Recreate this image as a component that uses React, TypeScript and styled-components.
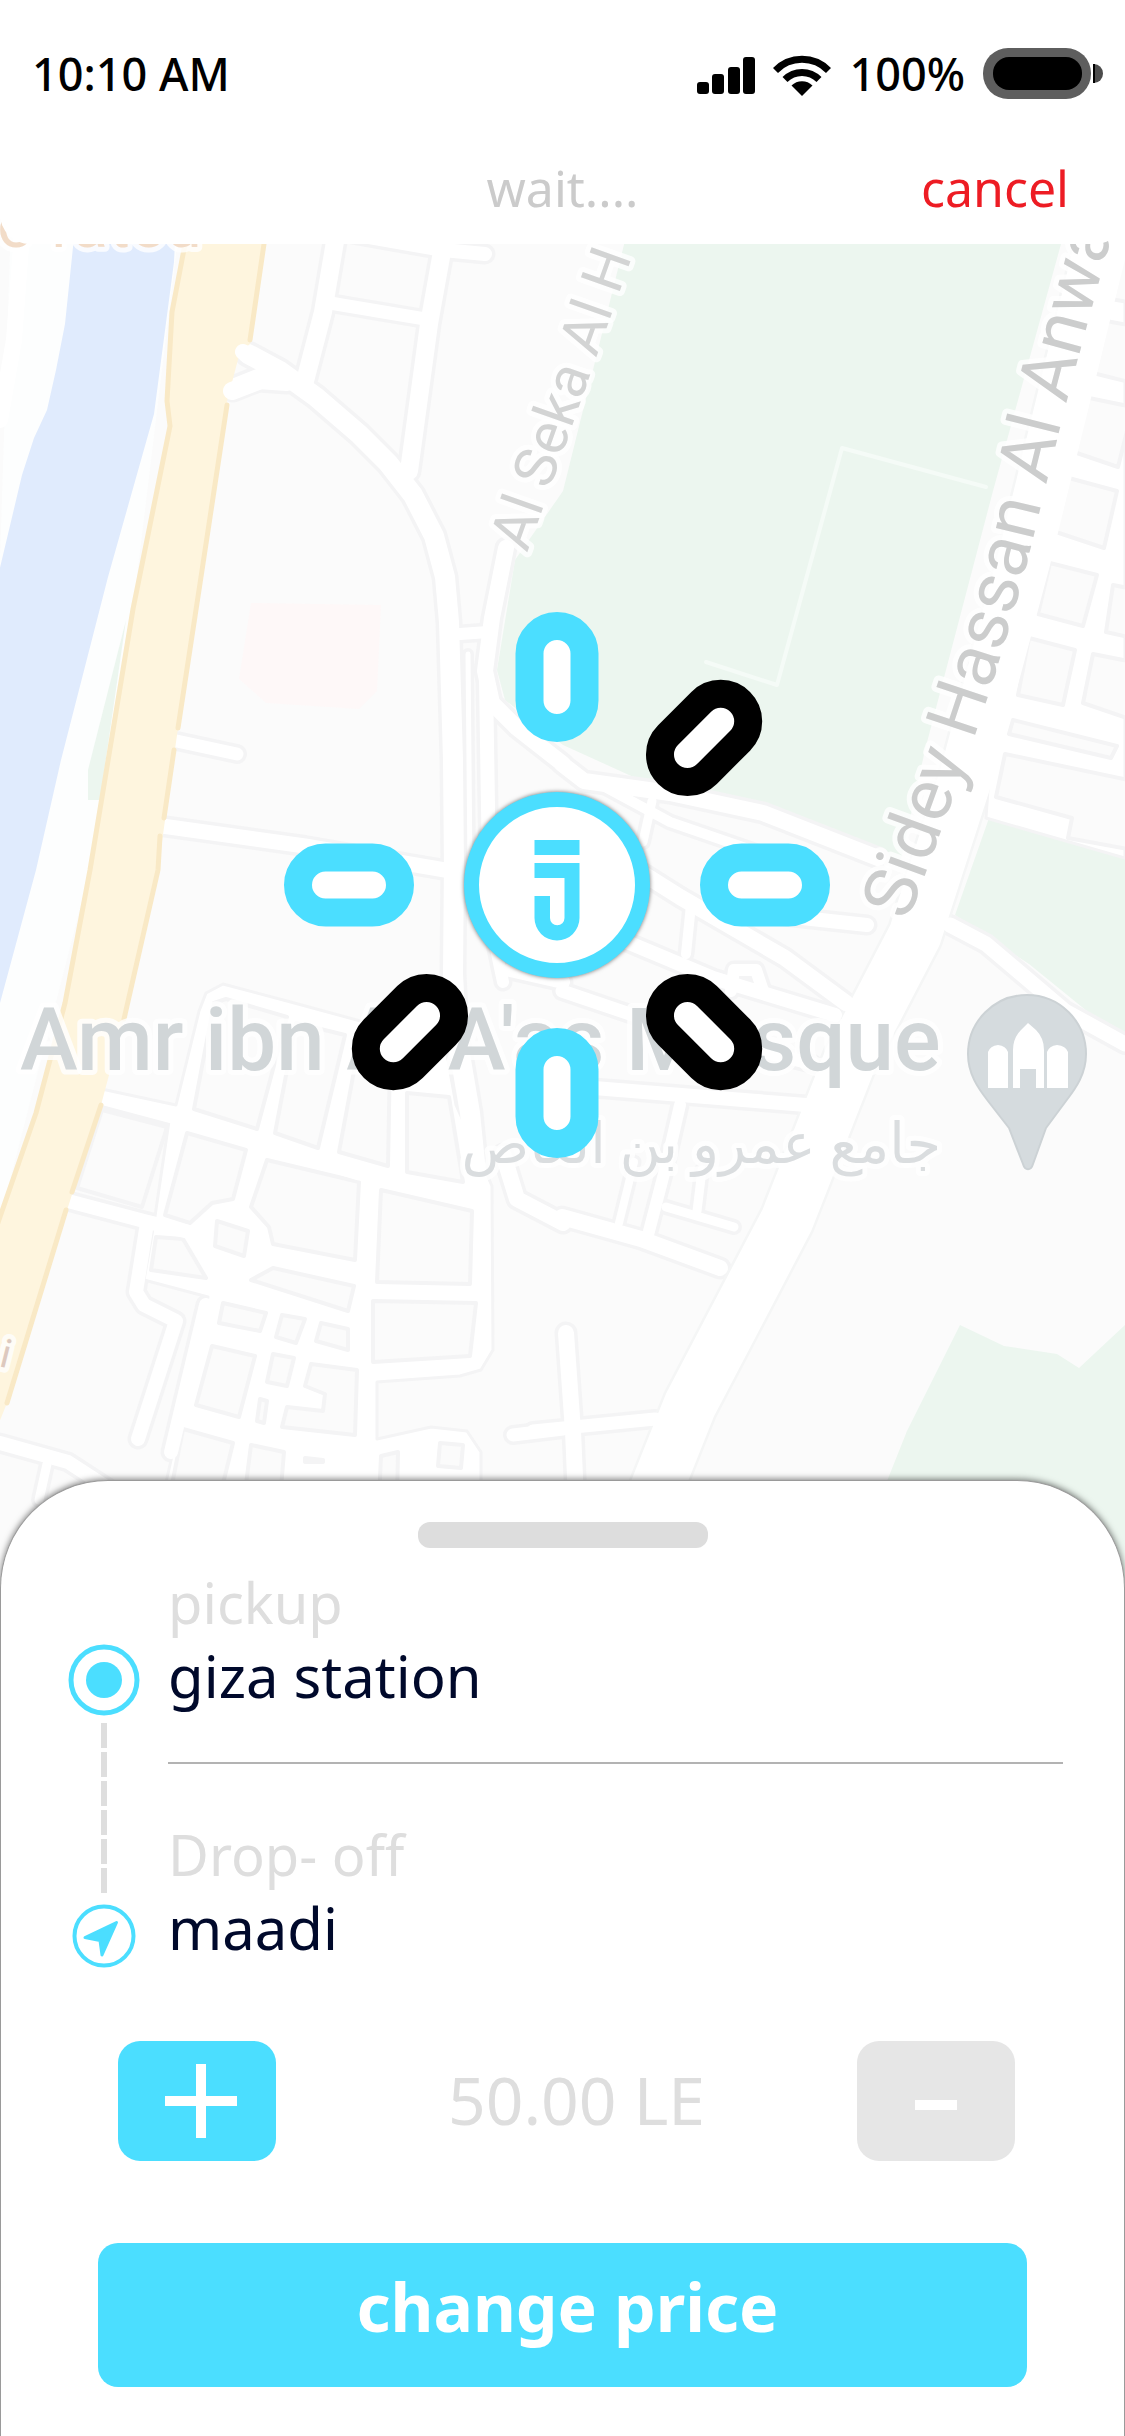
import React, { useState } from "react";
import styled, { createGlobalStyle } from "styled-components";

const CYAN = "#4bdeff";
const INK = "#00092b";
const MUTED = "#dedede";

const GlobalStyle = createGlobalStyle`
  *, *::before, *::after { box-sizing: border-box; }
  body {
    margin: 0;
    background: #ffffff;
    font-family: "Noto Sans", "Open Sans", sans-serif;
  }
  button { font: inherit; border: 0; padding: 0; cursor: pointer; }
`;

/* ---------- layout ---------- */

const Screen = styled.main`
  display: flex;
  flex-direction: column;
  min-height: 100vh;
  overflow: hidden;
`;

const Header = styled.header`
  position: relative;
  z-index: 1;
  background: #ffffff;
  border-radius: 0 0 30px 30px;
`;

const StatusBar = styled.div`
  display: flex;
  align-items: center;
  justify-content: space-between;
  height: 148px;
  padding: 0 22px 0 32px;
  color: #000000;
  font-size: 45px;
  font-weight: 500;
  line-height: 60px;
`;

const StatusGroup = styled.div`
  display: flex;
  align-items: center;
  gap: 18px;
`;

const NavBar = styled.div`
  display: grid;
  grid-template-columns: 1fr auto 1fr;
  align-items: center;
  height: 96px;
  padding: 0 56px 16px;
  font-size: 50px;
  line-height: 64px;
`;

const Title = styled.h1`
  grid-column: 2;
  margin: 0;
  font: inherit;
  color: #cbcbcb;
`;

const CancelButton = styled.button`
  justify-self: end;
  background: none;
  color: #ed1c24;
`;

const MapArea = styled.section`
  position: relative;
  height: 1400px;
  margin-top: -44px;
`;

const MapCanvas = styled.svg`
  display: block;
  width: 100%;
  height: 100%;
`;

const Sheet = styled.section`
  position: relative;
  z-index: 1;
  flex: 1;
  display: flex;
  flex-direction: column;
  margin-top: -120px;
  padding: 41px 61px 44px;
  background: #ffffff;
  border: 1px solid #9a9a9a;
  border-bottom: 0;
  border-radius: 108px 108px 0 0;
  box-shadow: 0 -1px 6px rgba(0, 0, 0, 0.5);
`;

const Handle = styled.div`
  align-self: center;
  width: 290px;
  height: 26px;
  border-radius: 12px;
  background: #dddddd;
`;

const Route = styled.div`
  display: grid;
  grid-template-columns: 84px 1fr;
  column-gap: 22px;
  margin-top: 16px;
`;

const Rail = styled.div`
  display: flex;
  flex-direction: column;
  align-items: center;
  padding-top: 80px;
`;

const Dashes = styled.div`
  display: flex;
  flex-direction: column;
  gap: 4px;
  margin: 7px 0 11px;
`;

const Dash = styled.span`
  width: 6px;
  height: 25px;
  background: ${MUTED};
`;

const Stops = styled.dl`
  margin: 0;
`;

const Stop = styled.div<{ $divided?: boolean }>`
  padding-bottom: ${(p) => (p.$divided ? "50px" : "0")};
  margin-bottom: ${(p) => (p.$divided ? "52px" : "0")};
  border-bottom: ${(p) => (p.$divided ? "2px solid #b3b3b3" : "0")};
`;

const StopLabel = styled.dt`
  color: ${MUTED};
  font-size: 56px;
  line-height: 76px;
`;

const StopPlace = styled.dd`
  margin: 0;
  color: ${INK};
  font-size: 58px;
  line-height: 72px;
`;

const PriceRow = styled.div`
  display: flex;
  align-items: center;
  justify-content: space-between;
  margin: 73px 48px 0 56px;
`;

const StepButton = styled.button<{ $tone: string }>`
  display: grid;
  place-items: center;
  width: 158px;
  height: 120px;
  border-radius: 22px;
  background: ${(p) => p.$tone};
`;

const Price = styled.output`
  padding: 0 0 4px 20px;
  color: ${MUTED};
  font-size: 66px;
  line-height: 88px;
`;

const ChangeButton = styled.button`
  height: 144px;
  margin: 82px 36px 0;
  padding: 0 0 18px 10px;
  border-radius: 20px;
  background: ${CYAN};
  color: #ffffff;
  font-size: 66px;
  font-weight: 700;
  line-height: 88px;
`;

/* ---------- icons ---------- */

const SignalIcon = () => (
  <svg width="58" height="40" viewBox="0 0 58 40" aria-hidden="true">
    <rect x="0" y="28" width="12" height="12" rx="3" />
    <rect x="15" y="20" width="12" height="20" rx="3" />
    <rect x="31" y="13" width="12" height="27" rx="3" />
    <rect x="46" y="3" width="12" height="37" rx="3" />
  </svg>
);

const WifiIcon = () => (
  <svg width="58" height="44" viewBox="0 0 58 44" aria-hidden="true">
    <g fill="none" stroke="#000" strokeWidth="7">
      <path d="M2.500 18.500A37 37 0 0 1 55.500 18.500" />
      <path d="M12 27.500A24 24 0 0 1 46 27.500" />
    </g>
    <path d="M18.500 33.500A15 15 0 0 1 39.500 33.500L29 44Z" />
  </svg>
);

const BatteryIcon = () => (
  <svg width="120" height="52" viewBox="0 0 120 52" aria-hidden="true">
    <rect x="0" y="0" width="108" height="51" rx="25" fill="#5e5e5e" />
    <rect x="10" y="9" width="89" height="33" rx="16" />
    <path d="M111 16a9 9.500 0 0 1 0 19Z" fill="#4c4c4c" />
    <path d="M111 16v19" stroke="#000" strokeWidth="2" />
  </svg>
);

const PickupIcon = () => (
  <svg width="72" height="72" viewBox="0 0 72 72" aria-hidden="true">
    <circle cx="36" cy="36" r="33" fill="none" stroke={CYAN} strokeWidth="5" />
    <circle cx="36" cy="36" r="18" fill={CYAN} />
  </svg>
);

const DropoffIcon = () => (
  <svg width="64" height="64" viewBox="0 0 64 64" aria-hidden="true">
    <circle cx="32" cy="32" r="29.500" fill="none" stroke={CYAN} strokeWidth="4" />
    <path
      d="M44.500 18.500 30 51 28 36.500 13 33.500Z"
      fill={CYAN}
      stroke={CYAN}
      strokeWidth="3"
      strokeLinejoin="round"
    />
  </svg>
);

const PlusIcon = () => (
  <svg width="80" height="74" viewBox="0 0 80 74" aria-hidden="true">
    <path d="M44 0v74M8 37h72" stroke="#fff" strokeWidth="10" />
  </svg>
);

const MinusIcon = () => (
  <svg width="42" height="74" viewBox="0 0 42 74" aria-hidden="true">
    <path d="M0 41h42" stroke="#fff" strokeWidth="10" />
  </svg>
);

/* ---------- map ---------- */

type Origin = [number, number];
const NW: Origin = [0, 230];
const NE: Origin = [562, 230];
const SW: Origin = [0, 860];
const SE: Origin = [562, 860];

/* Survey data is stored per quadrant; this projects it onto the map plane. */
const plot = ([ox, oy]: Origin, data: string) =>
  data
    .split(" ")
    .map((pair) => {
      const [x, y] = pair.split(",").map(Number);
      return `${Math.round(ox + x * 0.359)},${Math.round(oy + y * 0.408)}`;
    })
    .join(" ");

const roads: [Origin, number, string][] = [
  [NW, 20, "690,305 780,345 880,410 1000,500 1080,570 1150,650 1210,750 1240,850 1250,960 1262,1300 1265,1568"],
  [SW, 20, "1265,0 1262,280 1270,420 1310,620 1330,790"],
  [NW, 20, "650,390 720,365 800,370"],
  [NW, 18, "940,0 900,200 850,370"],
  [NW, 18, "1235,40 1195,230 1140,590"],
  [NW, 13, "920,180 1200,220"],
  [NW, 14, "980,10 1235,50 1350,60"],
  [NW, 16, "1410,780 1370,950 1350,1080 1370,1160 1440,1220 1568,1310"],
  [NW, 12, "1280,990 1360,985"],
  [NW, 5, "1305,1040 1310,1568"],
  [NW, 14, "1355,1100 1362,1568"],
  [SW, 12, "1362,0 1368,160 1400,300"],
  [NE, 16, "0,1310 60,1350 300,1380 560,1430 880,1540"],
  [NE, 10, "90,1350 300,1450 560,1530 700,1568"],
  [NE, 9, "250,1400 225,1500"],
  [NW, 13, "480,1250 660,1285"],
  [NW, 15, "450,1460 850,1510 1240,1568"],
  [SW, 13, "270,580 520,640 1000,770 1340,830"],
  [SW, 14, "190,835 400,885 560,920"],
  [SW, 14, "410,890 380,1060 400,1090 490,1130 385,1420"],
  [SW, 14, "575,1090 475,1450"],
  [SW, 14, "0,1430 190,1475 300,1540"],
  [SW, 9, "130,1480 110,1568"],
  [SW, 13, "1430,1410 1568,1395"],
  [SW, 16, "1400,720 1440,830 1568,890"],
  [SW, 14, "1568,300 1420,270"],
  [SE, 14, "0,120 180,200 420,290 760,380"],
  [SE, 16, "200,20 330,90 620,240 790,350"],
  [SE, 10, "360,110 345,230"],
  [SE, 12, "470,320 480,270 540,270 560,320"],
  [SE, 14, "540,130 850,160"],
  [SE, 13, "0,320 330,420 700,500"],
  [SE, 14, "90,560 400,580 680,600"],
  [SE, 12, "330,600 290,750 240,920"],
  [SE, 8, "200,740 160,890"],
  [SE, 9, "290,850 480,900"],
  [SE, 9, "390,760 375,860"],
  [SE, 16, "0,875 220,930 440,1000"],
  [SE, 16, "10,1160 30,1400 40,1568"],
  [SE, 13, "-80,1400 260,1370"],
  [SE, 15, "1080,160 1180,205 1400,370 1568,450"],
];

const streetGrid: [Origin, string][] = [
  [SW, "270,560 490,600 555,370 575,325 620,305 800,345 1240,450 1270,600 1370,800 1372,1200 1340,1250 1280,1265 1050,1280 1050,1420 1200,1390 1300,1400 1340,1450 1340,1568 450,1568 580,1070 400,1030 430,890 470,640 280,600"],
  [NE, "1490,0 1568,0 1568,1540 1180,1440 1200,1200 1400,500"],
];

const blocks: [Origin, string][] = [
  [SW, "285,612 465,655 395,850 215,805"],
  [SW, "540,610 595,350 630,340 800,385 715,660"],
  [SW, "765,670 825,400 960,430 885,705"],
  [SW, "945,715 1000,450 1085,480 1080,750"],
  [SW, "1135,570 1250,580 1290,790 1135,765"],
  [SW, "520,670 685,710 650,830 590,840 530,890 460,870"],
  [SW, "745,735 1000,790 990,980 760,940 750,900 700,850"],
  [SW, "1060,810 1315,860 1310,1040 1050,1035"],
  [SW, "435,925 510,930 575,1025 420,1005"],
  [SW, "605,885 690,910 680,970 600,945"],
  [SW, "760,1000 985,1045 970,1105 700,1030"],
  [SW, "620,1085 740,1110 725,1155 610,1135"],
  [SW, "785,1115 850,1125 825,1185 770,1170"],
  [SW, "895,1135 970,1150 970,1200 880,1180"],
  [SW, "590,1190 710,1215 665,1365 545,1335"],
  [SW, "760,1210 820,1220 800,1290 745,1280"],
  [SW, "865,1235 995,1250 990,1410 785,1390 800,1340 900,1350 905,1310 850,1290"],
  [SW, "725,1320 745,1325 735,1380 715,1375"],
  [SW, "1040,1080 1325,1085 1310,1215 1040,1230"],
  [SW, "510,1395 650,1430 610,1568 470,1568"],
  [SW, "700,1435 790,1450 780,1568 680,1568"],
  [SW, "850,1465 900,1470 900,1475 850,1475"],
  [SW, "1060,1460 1110,1450 1105,1568 1055,1568"],
  [SW, "1225,1430 1290,1435 1285,1490 1220,1485"],
  [NE, "1555,60 1590,60 1590,180 1530,170"],
  [NE, "1500,220 1590,235 1590,375 1480,350"],
  [NE, "1455,410 1590,435 1550,580 1425,545"],
  [NE, "1400,605 1545,640 1510,780 1375,740"],
  [NE, "1360,815 1490,845 1450,970 1325,940"],
  [NE, "1300,1000 1430,1030 1395,1165 1270,1140"],
  [NE, "1480,1040 1590,1060 1590,1200 1450,1160"],
  [NE, "1535,870 1590,880 1590,1000 1515,985"],
  [NE, "1255,1200 1545,1265 1530,1295 1245,1235"],
  [NE, "1235,1285 1590,1350 1590,1520 1410,1490 1420,1440 1210,1390"],
];

const MapLabel = styled.text<{ $size: number; $tone: string; $weight?: number }>`
  font-family: Roboto, "Noto Sans", "DejaVu Sans", sans-serif;
  font-size: ${(p) => p.$size}px;
  font-weight: ${(p) => p.$weight ?? 400};
  fill: ${(p) => p.$tone};
  stroke: rgba(255, 255, 255, 0.8);
  stroke-width: 10px;
  stroke-linejoin: round;
  paint-order: stroke;
`;

const AVENUE = "1120,180 1100,250 1024,560 965,780 915,935 850,1060 787,1220 690,1405 652,1500";

const Streets = () => (
  <g strokeLinejoin="round" strokeLinecap="round">
    <rect x="-400" y="100" width="1925" height="1600" fill="#fbfbfb" />
    <polygon points={plot(NW, "700,915 1060,920 1050,1130 1000,1175 740,1160 665,1100")} fill="#fef8f8" />

    {/* park areas */}
    <g fill="#ecf6ef">
      <polygon points="640,180 1100,180 1061,244 993,491 925,750 900,865 770,815 640,780 563,745 505,700 497,670 515,560 563,491" />
      <polygon points={plot(NE, "1190,1440 1568,1530 1568,1990 1300,1800 1095,1680")} />
      <polygon points={plot(SE, "1110,1140 1230,1190 1380,1210 1440,1245 1568,1140 1568,1800 780,1800 960,1400")} />
    </g>
    <polyline points={plot(NE, "400,1060 600,1115 780,535 1180,630")} fill="none" stroke="#f5fbf7" strokeWidth="4" />

    {/* river and its bank */}
    <polygon points="40,180 185,180 133,609 90,870 0,1219 0,560 10,250" fill="#fdfefe" />
    <polygon
      points="80,180 178,180 174,262 154,414 108,577 61,760 36,870 -10,1040 -10,610 22,475 34,438 47,410 56,370 65,324"
      fill="#e0ebfd"
    />
    <polyline points="26,180 14,340 0,420" fill="none" stroke="#ffffff" strokeWidth="16" />
    <polygon points="126,620 88,770 88,800 100,800" fill="#ecf6ef" />

    {/* road casings, then street grids, then road surfaces */}
    <g fill="none">
      {roads.map(([o, w, d]) => (
        <polyline key={d} points={plot(o, d)} stroke="#f4f4f5" strokeWidth={w + 7} />
      ))}
      <polyline points={AVENUE} stroke="#f5f6f6" strokeWidth="58" />
    </g>
    {streetGrid.map(([o, d]) => (
      <polygon key={d} points={plot(o, d)} fill="#ffffff" stroke="#f4f4f5" strokeWidth="3" />
    ))}
    {blocks.map(([o, d]) => (
      <polygon key={d} points={plot(o, d)} fill="#fbfbfb" stroke="#f4f4f5" strokeWidth="4" />
    ))}
    <g fill="none" stroke="#ffffff">
      {roads.map(([o, w, d]) => (
        <polyline key={d} points={plot(o, d)} strokeWidth={w} />
      ))}
      <polyline points={AVENUE} strokeWidth="53" />
    </g>

    {/* corniche highway */}
    <polygon
      points="195,180 276,180 264,244 250,344 240,352 226,405 201,577 178,728 158,870 124,1019 101,1105 68,1207 7,1403 -8,1440 -8,1240 36,1113 65,1003 90,870 133,609 170,426 167,401 172,312 185,244"
      fill="#fef5de"
    />
    <g fill="none" stroke="#f9e9c6" strokeWidth="5">
      <polyline points="190,200 185,244 172,312 167,401 170,426 133,609 90,870 65,1003 36,1113 -8,1240" />
      <polyline points="270,200 264,244 250,340" />
      <polyline points="227,405 201,577 178,728" />
      <polyline points="174,750 164,818" />
      <polyline points="160,836 158,870 124,1019" />
      <polyline points="101,1105 72,1192" />
      <polyline points="66,1210 7,1403" />
    </g>
    <polyline points="243,352 262,362" fill="none" stroke="#ffffff" strokeWidth="16" />
    <polyline points="232,391 266,378" fill="none" stroke="#ffffff" strokeWidth="18" />
  </g>
);

const MosquePin = () => (
  <g>
    <path
      d="M1027 995a59 59 0 0 1 59 59c0 20-10 34-20 47L1046 1128 1033 1164c-2 7-8 7-10 0L1009 1128 988 1101c-10-13-20-27-20-47a59 59 0 0 1 59-59Z"
      fill="#d5dbde"
      stroke="#ccd2d5"
      strokeWidth="2"
      strokeLinejoin="round"
    />
    <path
      d="M988 1088v-36q2-6 10-7 8 1 10 7v36ZM1013 1088v-38q0-12 8-20l7-7 8 7q8 8 8 20v38ZM1047 1088v-36q2-6 10-7 9 1 11 7v36Z"
      fill="#ffffff"
    />
    <path d="M1020 1088v-19h16v19Z" fill="#d5dbde" />
  </g>
);

const capsules = [
  { angle: 0, tone: CYAN },
  { angle: 45, tone: "#000000" },
  { angle: 90, tone: CYAN },
  { angle: 135, tone: "#000000" },
  { angle: 180, tone: CYAN },
  { angle: 225, tone: "#000000" },
  { angle: 270, tone: CYAN },
];

const SearchSpinner = () => (
  <g transform="translate(557 885)">
    {capsules.map(({ angle, tone }) => (
      <rect
        key={angle}
        transform={`rotate(${angle})`}
        x="-27.500"
        y="-259"
        width="55"
        height="102"
        rx="27.500"
        fill="#ffffff"
        stroke={tone}
        strokeWidth="28"
      />
    ))}
    <circle
      r="85.500"
      fill="#ffffff"
      stroke={CYAN}
      strokeWidth="15"
      style={{ filter: "drop-shadow(0 0 2px rgba(0,0,0,.55))" }}
    />
    <path d="M-22.500-45h45v15h-45ZM-22.500-22h45v55a22.500 22.500 0 0 1-45 0V11h15.500v22a7 7 0 0 0 14.500 0V-7h-30Z" fill={CYAN} />
  </g>
);

const RideMap = () => (
  <MapCanvas viewBox="0 200 1125 1400" preserveAspectRatio="xMidYMin slice" role="img" aria-label="Map">
    <Streets />
    <MapLabel $size={66} $tone="#f2dcc8" x="202" y="247" textAnchor="end">o rated</MapLabel>
    <MapLabel $size={40} $tone="#ddc9bf" transform="translate(-2 1366) rotate(14)">i</MapLabel>
    <MapLabel $size={58} $tone="#d3d4d4" transform="translate(527 553) rotate(-70.500)">Al Seka Al H</MapLabel>
    <path id="avenue-label" d="M908 922C955 790 1000 680 1040 510S1110 250 1150 90" fill="none" />
    <MapLabel $size={73} $tone="#cccdcd">
      <textPath href="#avenue-label">Sidey Hassan Al Anwar</textPath>
    </MapLabel>
    <MapLabel $size={87} $weight={500} $tone="#d1d6d8" x="20" y="1070">Amr ibn Al A'as Mosque</MapLabel>
    <MapLabel $size={56} $tone="#dadddf" x="941" y="1163" direction="rtl">جامع عمرو بن العاص</MapLabel>
    <MosquePin />
    <SearchSpinner />
  </MapCanvas>
);

/* ---------- screen ---------- */

export default function App() {
  const [price, setPrice] = useState(50);

  return (
    <>
      <GlobalStyle />
      <Screen>
        <Header>
          <StatusBar>
            <span>10:10 AM</span>
            <StatusGroup>
              <SignalIcon />
              <WifiIcon />
              <span>100%</span>
              <BatteryIcon />
            </StatusGroup>
          </StatusBar>
          <NavBar>
            <Title>wait....</Title>
            <CancelButton type="button">cancel</CancelButton>
          </NavBar>
        </Header>

        <MapArea>
          <RideMap />
        </MapArea>

        <Sheet>
          <Handle />
          <Route>
            <Rail>
              <PickupIcon />
              <Dashes>
                {Array.from({ length: 6 }, (_, i) => (
                  <Dash key={i} />
                ))}
              </Dashes>
              <DropoffIcon />
            </Rail>
            <Stops>
              <Stop $divided>
                <StopLabel>pickup</StopLabel>
                <StopPlace>giza station</StopPlace>
              </Stop>
              <Stop>
                <StopLabel>Drop- off</StopLabel>
                <StopPlace>maadi</StopPlace>
              </Stop>
            </Stops>
          </Route>
          <PriceRow>
            <StepButton type="button" $tone={CYAN} aria-label="Increase price" onClick={() => setPrice(price + 5)}>
              <PlusIcon />
            </StepButton>
            <Price>{price.toFixed(2)} LE</Price>
            <StepButton type="button" $tone="#e6e6e6" aria-label="Decrease price" onClick={() => setPrice(Math.max(0, price - 5))}>
              <MinusIcon />
            </StepButton>
          </PriceRow>
          <ChangeButton type="button">change price</ChangeButton>
        </Sheet>
      </Screen>
    </>
  );
}
